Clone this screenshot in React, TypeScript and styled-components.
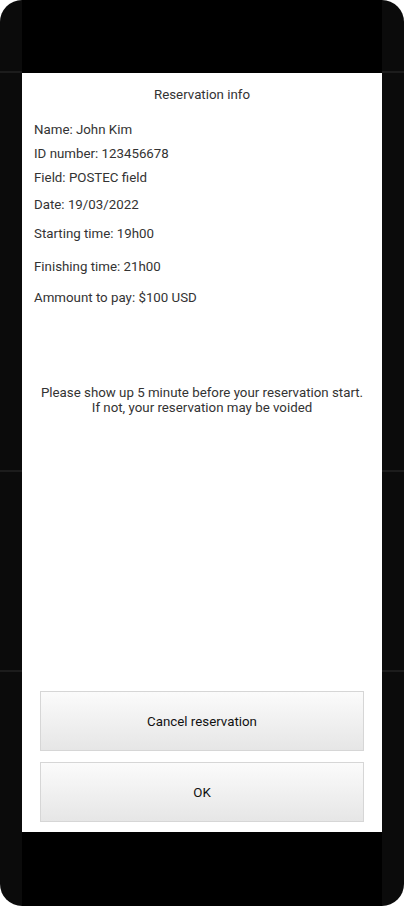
import React from "react";
import styled, { createGlobalStyle } from "styled-components";

const Global = createGlobalStyle`
  html, body { margin: 0; padding: 0; background: #ffffff; }
  body { font-family: Roboto, "Liberation Sans", Arial, sans-serif; }
  * { box-sizing: border-box; }
`;

const Frame = styled.div`
  width: 404px;
  height: 906px;
  border-radius: 22px;
  overflow: hidden;
  background: #0b0b0b;
  display: grid;
  grid-template-columns: 22px 360px 22px;
`;

const Side = styled.div`
  display: flex;
  flex-direction: column;
`;

const SideRow = styled.div<{ $h?: number }>`
  height: ${(p) => (p.$h ? `${p.$h}px` : "auto")};
  flex: ${(p) => (p.$h ? "none" : "1")};
  border-bottom: ${(p) => (p.$h ? "2px solid #1c1c1c" : "none")};
`;

const Center = styled.div`
  display: flex;
  flex-direction: column;
  background: #000;
`;

const Shade = styled.div<{ $h: number }>`
  height: ${(p) => p.$h}px;
  flex: none;
`;

const Modal = styled.div`
  flex: 1;
  background: #ffffff;
  display: flex;
  flex-direction: column;
  padding: 14px 0 10px;
  color: #333;
  font-size: 13.3px;
`;

const Title = styled.div`
  text-align: center;
  line-height: 16px;
  margin-bottom: 19px;
`;

const Row = styled.div<{ $gap: number }>`
  padding-left: 12px;
  line-height: 16px;
  margin-top: ${(p) => p.$gap}px;
`;

const Notice = styled.div`
  margin-top: 79px;
  text-align: center;
  line-height: 15px;
`;

const Actions = styled.div`
  margin-top: auto;
  padding: 0 18px;
  display: flex;
  flex-direction: column;
  gap: 11px;
`;

const Button = styled.button`
  height: 60px;
  width: 100%;
  border: 1px solid #d6d6d6;
  border-radius: 0;
  background: linear-gradient(#fbfbfb, #e6e6e6);
  color: #111;
  font-family: Roboto, "Liberation Sans", Arial, sans-serif;
  font-size: 13.3px;
  padding: 0;
`;

const rows: [string, number][] = [
  ["Name: John Kim", 0],
  ["ID number: 123456678", 8],
  ["Field: POSTEC field", 8],
  ["Date: 19/03/2022", 11],
  ["Starting time: 19h00", 13],
  ["Finishing time: 21h00", 17],
  ["Ammount to pay: $100 USD", 15],
];

const SideColumn = () => (
  <Side>
    <SideRow $h={73} />
    <SideRow $h={399} />
    <SideRow $h={200} />
    <SideRow />
  </Side>
);

export default function App() {
  return (
    <>
      <Global />
      <Frame>
        <SideColumn />
        <Center>
          <Shade $h={73} />
          <Modal>
            <Title>Reservation info</Title>
            {rows.map(([t, g]) => (
              <Row key={t} $gap={g}>
                {t}
              </Row>
            ))}
            <Notice>
              Please show up 5 minute before your reservation start.
              <br />
              If not, your reservation may be voided
            </Notice>
            <Actions>
              <Button>Cancel reservation</Button>
              <Button>OK</Button>
            </Actions>
          </Modal>
          <Shade $h={74} />
        </Center>
        <SideColumn />
      </Frame>
    </>
  );
}
